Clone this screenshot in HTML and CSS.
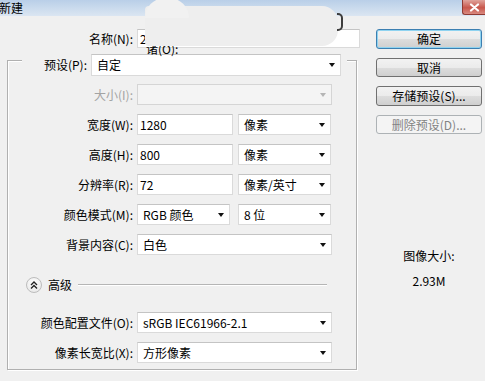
FILE: index.html
```html
<!DOCTYPE html>
<html lang="zh-CN">
<head>
  <meta charset="UTF-8">
  <title>新建</title>
  <link rel="stylesheet" href="styles.css">
</head>
<body>

  <!-- Заголовок окна -->
  <div class="titlebar">
    <span class="title">新建</span>
    <span class="close">
      <svg width="11" height="9" viewBox="0 0 11 9"><path d="M2 1.5 L9 7.5 M9 1.5 L2 7.5" stroke="#fff" stroke-width="2.2" stroke-linecap="round"/></svg>
    </span>
  </div>

  <div class="dialog">
    <div class="main">
      <div class="name-row">
        <label>名称(N):</label>
        <div class="field name-field">2</div>
      </div>

      <!-- Группа параметров -->
      <div class="group">
        <div class="preset-row">
          <label>预设(P):</label>
          <div class="select preset">自定</div>
        </div>

        <div class="grid">
          <label class="disabled">大小(I):</label>
          <div class="select full off"></div>

          <label>宽度(W):</label>
          <div class="pair">
            <div class="field num">1280</div>
            <div class="select unit">像素</div>
          </div>

          <label>高度(H):</label>
          <div class="pair">
            <div class="field num">800</div>
            <div class="select unit">像素</div>
          </div>

          <label>分辨率(R):</label>
          <div class="pair">
            <div class="field num">72</div>
            <div class="select unit">像素/英寸</div>
          </div>

          <label>颜色模式(M):</label>
          <div class="pair mode">
            <div class="select">RGB 颜色</div>
            <div class="select unit">8 位</div>
          </div>

          <label>背景内容(C):</label>
          <div class="select full">白色</div>
        </div>

        <div class="advanced">
          <span class="toggle">
            <svg width="8" height="8" viewBox="0 0 8 8"><path d="M1 4 L4 1 L7 4 M1 7.5 L4 4.5 L7 7.5" fill="none" stroke="#222" stroke-width="1.4"/></svg>
          </span>
          <span class="adv-text">高级</span>
          <span class="adv-line"></span>
        </div>

        <div class="grid">
          <label>颜色配置文件(O):</label>
          <div class="select full">sRGB IEC61966-2.1</div>

          <label>像素长宽比(X):</label>
          <div class="select full">方形像素</div>
        </div>
      </div>
    </div>

    <!-- Кнопки справа -->
    <div class="side">
      <button class="btn default">确定</button>
      <button class="btn">取消</button>
      <button class="btn">存储预设(S)...</button>
      <button class="btn" disabled>删除预设(D)...</button>

      <div class="info">
        <p>图像大小:</p>
        <p>2.93M</p>
      </div>
    </div>
  </div>

  <!-- Закрашенная область поверх окна -->
  <span class="peek">诸(O):</span>
  <div class="mask">
    <span class="bump"></span>
    <span class="bracket"></span>
  </div>

</body>
</html>
```

FILE: styles.css
```css
* {
  margin: 0;
  padding: 0;
  box-sizing: border-box;
}

body {
  font-family: "Noto Sans CJK SC", sans-serif;
  font-size: 12px;
  line-height: 14px;
  color: #000;
  background-color: #f0f0f0;
  width: 485px;
  height: 381px;
  overflow: hidden;
  position: relative;
}

/* Title bar */
.titlebar {
  height: 16px;
  background: linear-gradient(#b9cfe8, #dbe6f2);
  display: flex;
  justify-content: space-between;
  align-items: flex-start;
}

.titlebar .title {
  margin-left: -1px;
  margin-top: 1px;
}

.titlebar .close {
  width: 23px;
  height: 15px;
  background: linear-gradient(#e0a49c, #c8574c 55%, #d98a80);
  border: 1px solid #8f3b33;
  border-top: none;
  border-right: none;
  border-radius: 0 0 0 3px;
  display: flex;
  align-items: center;
  justify-content: center;
}

.dialog {
  display: flex;
}

.main {
  width: 360px;
}

label {
  text-align: right;
  padding-right: 4px;
  line-height: 21px;
  white-space: nowrap;
}

label.disabled {
  color: #a3a3a3;
}

/* Поля */
.field,
.select {
  height: 21px;
  background-color: #fff;
  border: 1px solid #dadada;
  border-top-color: #c4c4c4;
  line-height: 19px;
  white-space: nowrap;
  overflow: hidden;
  position: relative;
}

.field {
  padding-left: 2px;
}

.select {
  padding-left: 5px;
}

.select::after {
  content: "";
  position: absolute;
  right: 5px;
  top: 8px;
  border-left: 3.5px solid transparent;
  border-right: 3.5px solid transparent;
  border-top: 4px solid #111;
}

.select.off {
  background-color: #f4f4f4;
  border-color: #d5d5d5;
}

.select.off::after {
  border-top-color: #b5b5b5;
}

.name-row {
  display: flex;
  margin-top: 13px;
}

.name-row label {
  width: 137px;
  line-height: 19px;
}

.name-field {
  width: 223px;
  height: 19px;
  line-height: 17px;
}

/* Группа */
.group {
  margin-top: 12px;
  margin-left: 7px;
  width: 350px;
  border: 1px solid #b0b0b0;
  box-shadow: inset 1px 1px 0 #fff, 1px 1px 0 #fff;
  padding-bottom: 6px;
}

.preset-row {
  display: flex;
  margin-top: -7px;
  margin-left: 14px;
  width: 325px;
  padding-right: 6px;
  background-color: #f0f0f0;
}

.preset-row label {
  width: 69px;
  line-height: 22px;
}

.preset {
  width: 250px;
  height: 22px;
  line-height: 20px;
}

.grid {
  display: grid;
  grid-template-columns: 129px 195px;
  row-gap: 9px;
  margin-top: 8px;
}

.pair {
  display: flex;
  gap: 5px;
}

.pair .num {
  width: 96px;
}

.pair .unit {
  width: 93px;
}

.pair.mode {
  gap: 8px;
}

.pair.mode .select:first-child {
  width: 93px;
}

/* Дополнительно */
.advanced {
  display: flex;
  align-items: center;
  height: 16px;
  margin: 22px 0 19px 18px;
}

.toggle {
  width: 16px;
  height: 16px;
  border-radius: 50%;
  border: 1px solid #bdbdbd;
  background: radial-gradient(circle at 50% 35%, #fff, #e4e4e4);
  display: flex;
  align-items: center;
  justify-content: center;
}

.adv-text {
  margin-left: 6px;
}

.adv-line {
  width: 249px;
  margin-left: 6px;
  border-top: 1px solid #b5b5b5;
  border-bottom: 1px solid #fff;
}

/* Кнопки */
.side {
  margin-left: 16px;
  width: 106px;
  padding-top: 13px;
  display: flex;
  flex-direction: column;
  gap: 9px;
}

.btn {
  font-family: inherit;
  font-size: 12px;
  height: 19.5px;
  border: 1px solid #707070;
  border-radius: 3px;
  background: linear-gradient(#f2f2f2 0%, #ebebeb 50%, #dddddd 51%, #cfcfcf 100%);
  color: #000;
}

.btn.default {
  border-color: #3c7fb1;
  box-shadow: inset 0 0 0 1px #8fd3f0;
}

.btn:disabled {
  border-color: #adb2b5;
  background: #f4f4f4;
  color: #838383;
}

.info {
  margin-top: 106px;
  text-align: center;
}

.info p {
  line-height: 14px;
  margin-bottom: 11px;
}

/* Маска */
.peek {
  position: absolute;
  left: 146px;
  top: 42px;
}

.mask {
  position: absolute;
  left: 145px;
  top: 6px;
  width: 193px;
  height: 40px;
  background-color: #eeeeee;
  border-radius: 4px 16px 16px 4px;
}

.mask .bump {
  position: absolute;
  left: 0;
  top: -8px;
  width: 44px;
  height: 20px;
  border-radius: 22px 22px 0 0;
  background-color: #f1f1f1;
}

.mask .bracket {
  position: absolute;
  left: 192px;
  top: 7px;
  width: 6px;
  height: 18px;
  border: 2px solid #3d3d3d;
  border-left: none;
  border-radius: 0 5px 5px 0;
}
```
